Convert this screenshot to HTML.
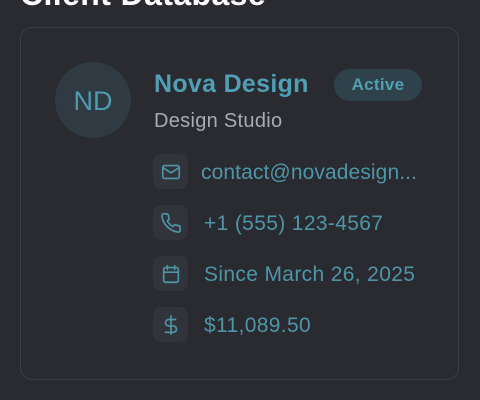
<!DOCTYPE html>
<html><head><style>
body{margin:0;width:480px;height:400px;background:#2a2b30;font-family:"Liberation Sans",sans-serif;overflow:hidden;position:relative}
.t{position:absolute;left:20px;top:-24px;font-size:32px;font-weight:bold;color:#fff;margin:0;letter-spacing:0.4px}
.card{position:absolute;left:20px;top:27px;width:439px;height:353px;border:1px solid #3d3e44;border-radius:12px;box-sizing:border-box}
.av{position:absolute;left:55px;top:62px;width:76px;height:76px;border-radius:50%;background:#2f3a42;color:#4e9bb0;font-size:27px;text-align:center;line-height:78px}
.nm{position:absolute;left:154px;top:70px;font-size:25px;font-weight:bold;color:#519fb4;letter-spacing:0.3px}
.bd{position:absolute;left:334px;top:69px;width:88px;height:32px;border-radius:16px;background:#2f424b;color:#519fb4;font-size:17px;font-weight:bold;text-align:center;line-height:32px;letter-spacing:0.3px}
.sub{position:absolute;left:154px;top:110px;font-size:20px;color:#a9abb0;letter-spacing:0.3px}
.ic{position:absolute;left:153px;width:35px;height:35px;border-radius:8px;background:#31343a;display:flex;align-items:center;justify-content:center}
.tx{position:absolute;left:204px;font-size:21px;color:#4f95a8;line-height:37px;letter-spacing:0.35px}
svg{stroke:#4f95a8;fill:none;stroke-width:1.8;stroke-linecap:round;stroke-linejoin:round}
</style></head><body>
<h1 class="t">Client Database</h1>
<div class="card"></div>
<div class="av">ND</div>
<div class="nm">Nova Design</div>
<div class="bd">Active</div>
<div class="sub">Design Studio</div>
<div class="ic" style="top:154px"><svg width="22" height="22" viewBox="0 0 24 24"><rect x="3" y="5" width="18" height="14" rx="2"/><path d="M3 7l9 6 9-6"/></svg></div>
<div class="tx" style="top:154px;left:201px;letter-spacing:0.1px">contact@novadesign...</div>
<div class="ic" style="top:205px"><svg width="22" height="22" viewBox="0 0 24 24"><path d="M22 16.9v3a2 2 0 0 1-2.2 2 19.8 19.8 0 0 1-8.6-3.1 19.5 19.5 0 0 1-6-6A19.8 19.8 0 0 1 2.1 4.2 2 2 0 0 1 4.1 2h3a2 2 0 0 1 2 1.7c.1 1 .4 1.9.7 2.8a2 2 0 0 1-.5 2.1L8 9.8a16 16 0 0 0 6 6l1.3-1.3a2 2 0 0 1 2.1-.4c.9.3 1.8.6 2.8.7a2 2 0 0 1 1.7 2z"/></svg></div>
<div class="tx" style="top:205px">+1 (555) 123-4567</div>
<div class="ic" style="top:256px"><svg width="22" height="22" viewBox="0 0 24 24"><rect x="4" y="5" width="16" height="16" rx="2"/><path d="M16 3v4M8 3v4M4 10h16"/></svg></div>
<div class="tx" style="top:256px">Since March 26, 2025</div>
<div class="ic" style="top:307px"><svg width="22" height="22" viewBox="0 0 24 24"><path d="M12 2v20M17 6H9.5a3.5 3.5 0 0 0 0 7h5a3.5 3.5 0 0 1 0 7H6"/></svg></div>
<div class="tx" style="top:307px">$11,089.50</div>
</body></html>
